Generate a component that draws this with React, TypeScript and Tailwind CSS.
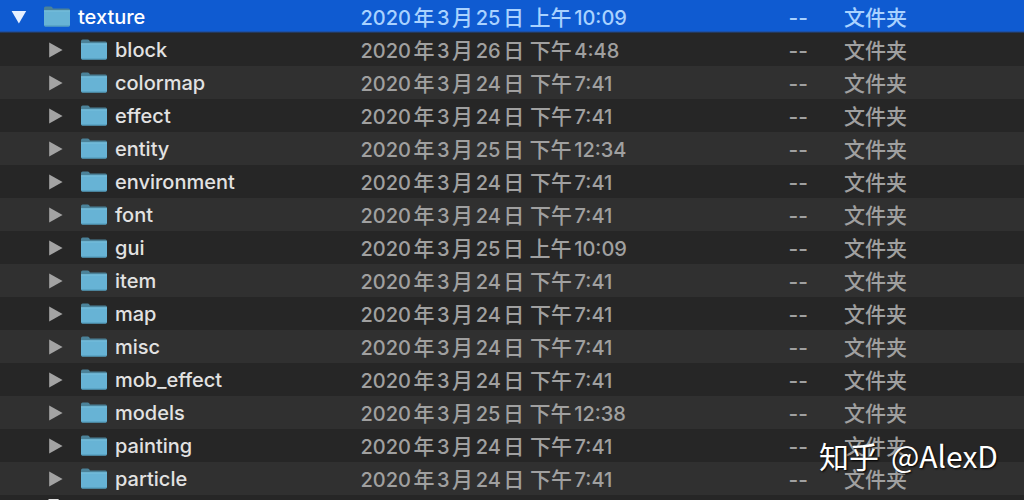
import clsx from "clsx";

interface Entry {
  name: string;
  date: string;
}

const children: Entry[] = [
  { name: "block", date: "2020年3月26日 下午4:48" },
  { name: "colormap", date: "2020年3月24日 下午7:41" },
  { name: "effect", date: "2020年3月24日 下午7:41" },
  { name: "entity", date: "2020年3月25日 下午12:34" },
  { name: "environment", date: "2020年3月24日 下午7:41" },
  { name: "font", date: "2020年3月24日 下午7:41" },
  { name: "gui", date: "2020年3月25日 上午10:09" },
  { name: "item", date: "2020年3月24日 下午7:41" },
  { name: "map", date: "2020年3月24日 下午7:41" },
  { name: "misc", date: "2020年3月24日 下午7:41" },
  { name: "mob_effect", date: "2020年3月24日 下午7:41" },
  { name: "models", date: "2020年3月25日 下午12:38" },
  { name: "painting", date: "2020年3月24日 下午7:41" },
  { name: "particle", date: "2020年3月24日 下午7:41" },
];

const FolderIcon = () => (
  <svg width="28" height="24" viewBox="0 0 28 24" aria-hidden="true" className="shrink-0">
    <path d="M1 3.2Q1 1.6 2.6 1.6H7.6Q8.8 1.6 9.4 2.6L9.9 3.4H25.5Q27 3.4 27 5V12H1Z" fill="#4b8299" />
    <path d="M1 5.4H27V20Q27 21.4 25.6 21.4H2.4Q1 21.4 1 20Z" fill="#67b3d5" />
    <path d="M1 5.4H27V6.4H1Z" fill="#7bc2df" />
    <path d="M1 20.4H27Q26.7 21.4 25.6 21.4H2.4Q1.3 21.4 1 20.4Z" fill="#4f97b8" />
  </svg>
);

const Disclosure = ({ name, open }: { name: string; open?: boolean }) => (
  <button
    aria-label={name}
    aria-expanded={!!open}
    className={clsx("flex w-4 h-4 shrink-0 items-center justify-center", open ? "text-[#e6f0ff]" : "text-[#a3a3a3]")}>
    <svg width="16" height="16" viewBox="0 0 16 16" fill="currentColor" aria-hidden="true">
      {open ? <path d="M0.6 2H15.2L7.9 14.6Z" /> : <path d="M1.2 0.4V15.4L14.6 7.9Z" />}
    </svg>
  </button>
);

// digits are set one size below the Chinese characters
const DateText = ({ value }: { value: string }) => (
  <>
    {value.split(/([\d:]+)/).map((part, i) =>
      i % 2 ? (
        <span key={i} className="text-[20px]">
          {part}
        </span>
      ) : (
        part
      )
    )}
  </>
);

const Row = ({ name, date, root }: Entry & { root?: boolean }) => (
  <tr
    className={clsx(
      "h-[33px]",
      root
        ? "bg-linear-to-b from-[#0f5bd1] from-94% to-[#232a36] to-100% text-[#a9d2ff]"
        : "text-[#a0a0a0] odd:bg-[#303030] even:bg-[#262626]"
    )}>
    <td className="p-0">
      <div className={clsx("flex items-center", root ? "pl-[11px]" : "pl-12")}>
        <Disclosure name={name} open={root} />
        <span className="ml-4 flex items-center gap-[7px]">
          <FolderIcon />
          <span className={clsx("pt-0.5 text-[20px]", root ? "text-white" : "text-[#e2e2e2]")}>{name}</span>
        </span>
      </div>
    </td>
    <td className="p-0 pt-0.5 whitespace-nowrap [text-autospace:normal]">
      <DateText value={date} />
    </td>
    <td className="p-0 pt-0.5 text-right">--</td>
    <td className="p-0 pt-0.5 pl-9">文件夹</td>
  </tr>
);

const App = () => (
  <main className="relative h-screen overflow-hidden bg-[#262626] font-['Inter','Noto_Sans_CJK_SC',sans-serif] text-[21px] leading-[29px] font-medium">
    <table className="w-full table-fixed border-collapse">
      <colgroup>
        <col className="w-[35.2%]" />
        <col className="w-[30%]" />
        <col className="w-[13.7%]" />
        <col />
      </colgroup>
      <tbody>
        <Row name="texture" date="2020年3月25日 上午10:09" root />
        {children.map((entry) => (
          <Row key={entry.name} {...entry} />
        ))}
        <tr className="h-[33px]">
          <td colSpan={4} className="p-0 pl-12">
            <svg width="20" height="28" viewBox="0 0 20 28" aria-hidden="true">
              <path d="M0.5 1H10L17 8V27H0.5Z" fill="#e4e4e4" />
              <path d="M10 1V8H17Z" fill="#b5b5b5" />
            </svg>
          </td>
        </tr>
      </tbody>
    </table>
    <p className="absolute right-[26px] bottom-[26px] flex gap-3 font-['Noto_Sans_CJK_SC',sans-serif] text-[30px] leading-[38px] font-normal text-white [text-shadow:1px_1px_2px_#000]">
      <span>知乎</span>
      <span>@AlexD</span>
    </p>
  </main>
);

export default App;
